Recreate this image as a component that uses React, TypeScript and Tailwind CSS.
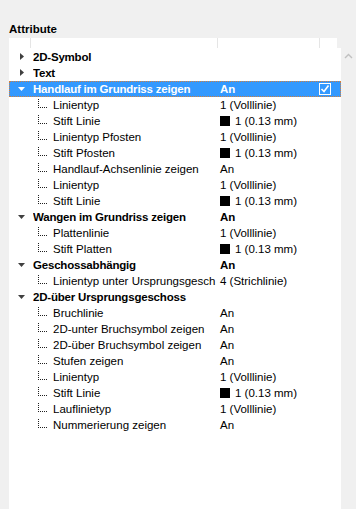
import React from 'react';

type Row = {
  label: string;
  value?: string;
  level: 0 | 1;
  open?: boolean;
  swatch?: boolean;
  boldValue?: boolean;
  selected?: boolean;
};

const rows: Row[] = [
  { label: '2D-Symbol', level: 0, open: false },
  { label: 'Text', level: 0, open: false },
  { label: 'Handlauf im Grundriss zeigen', value: 'An', level: 0, open: true, boldValue: true, selected: true },
  { label: 'Linientyp', value: '1 (Volllinie)', level: 1 },
  { label: 'Stift Linie', value: '1 (0.13 mm)', level: 1, swatch: true },
  { label: 'Linientyp Pfosten', value: '1 (Volllinie)', level: 1 },
  { label: 'Stift Pfosten', value: '1 (0.13 mm)', level: 1, swatch: true },
  { label: 'Handlauf-Achsenlinie zeigen', value: 'An', level: 1 },
  { label: 'Linientyp', value: '1 (Volllinie)', level: 1 },
  { label: 'Stift Linie', value: '1 (0.13 mm)', level: 1, swatch: true },
  { label: 'Wangen im Grundriss zeigen', value: 'An', level: 0, open: true, boldValue: true },
  { label: 'Plattenlinie', value: '1 (Volllinie)', level: 1 },
  { label: 'Stift Platten', value: '1 (0.13 mm)', level: 1, swatch: true },
  { label: 'Geschossabhängig', value: 'An', level: 0, open: true, boldValue: true },
  { label: 'Linientyp unter Ursprungsgesch', value: '4 (Strichlinie)', level: 1 },
  { label: '2D-über Ursprungsgeschoss', level: 0, open: true },
  { label: 'Bruchlinie', value: 'An', level: 1 },
  { label: '2D-unter Bruchsymbol zeigen', value: 'An', level: 1 },
  { label: '2D-über Bruchsymbol zeigen', value: 'An', level: 1 },
  { label: 'Stufen zeigen', value: 'An', level: 1 },
  { label: 'Linientyp', value: '1 (Volllinie)', level: 1 },
  { label: 'Stift Linie', value: '1 (0.13 mm)', level: 1, swatch: true },
  { label: 'Lauflinietyp', value: '1 (Volllinie)', level: 1 },
  { label: 'Nummerierung zeigen', value: 'An', level: 1 },
];

// kleine Pfeile wie im Windows-Baum
function Arrow({ open, white }: { open: boolean; white?: boolean }) {
  const fill = white ? '#ffffff' : '#404040';
  return open ? (
    <svg width="8" height="5" viewBox="0 0 8 5">
      <polygon points="0,0 7,0 3.5,4" fill={fill} />
    </svg>
  ) : (
    <svg width="5" height="8" viewBox="0 0 5 8">
      <polygon points="0,0 4,3.5 0,7" fill={fill} />
    </svg>
  );
}

// gepunktete Baumlinie
function TreeLine() {
  const dots: React.ReactNode[] = [];
  for (let y = 0; y <= 8; y += 2) dots.push(<rect key={'v' + y} x={0} y={y} width={1} height={1} />);
  for (let x = 2; x <= 8; x += 2) dots.push(<rect key={'h' + x} x={x} y={8} width={1} height={1} />);
  return (
    <svg width="9" height="9" viewBox="0 0 9 9" fill="#202020" className="mt-[-3px] shrink-0">
      {dots}
    </svg>
  );
}

function Checkbox() {
  return (
    <div className="w-[12px] h-[12px] border border-white flex items-center justify-center">
      <svg width="10" height="10" viewBox="0 0 10 10">
        <path d="M1.5 5 L4 7.5 L8.5 1.5" stroke="#ffffff" strokeWidth="1.6" fill="none" />
      </svg>
    </div>
  );
}

function TreeRow({ row }: { row: Row }) {
  const sel = row.selected;
  return (
    <div
      className={
        'relative flex items-center h-[16px] ' +
        (sel ? 'bg-[#3399ff] text-white outline-1 outline-dotted outline-offset-[-1px] outline-[#d08040]' : 'text-[#000000]')
      }
    >
      <div className="w-[24px] shrink-0 h-full flex items-center justify-center pl-[2px]">
        {row.level === 0 && <Arrow open={!!row.open} white={sel} />}
      </div>
      <div
        className={
          'w-[187px] shrink-0 flex items-center whitespace-nowrap overflow-hidden ' +
          (row.level === 0 ? 'font-bold tracking-[-0.2px]' : '')
        }
      >
        {row.level === 1 && (
          <div className="w-[20px] shrink-0 pl-[5px] flex items-center">
            <TreeLine />
          </div>
        )}
        <span>{row.label}</span>
      </div>
      <div className={'flex-1 flex items-center whitespace-nowrap ' + (row.boldValue ? 'font-bold' : '')}>
        {row.swatch && <span className="inline-block w-[10px] h-[10px] bg-black mr-[5px]" />}
        <span>{row.value}</span>
      </div>
      {sel && (
        <div className="w-[22px] flex items-center justify-start">
          <Checkbox />
        </div>
      )}
    </div>
  );
}

export default function App() {
  return (
    <div
      className="w-[356px] h-[509px] bg-[#f0f0f0] flex flex-col overflow-hidden text-[11.5px] leading-[16px]"
      style={{ fontFamily: '"Liberation Sans", Arial, sans-serif' }}
    >
      <div className="h-[38px] pl-[9px] pt-[21px] font-bold text-black">Attribute</div>
      <div className="flex flex-1">
        <div className="ml-[9px] w-[332px] flex flex-col">
          {/* Kopfzeile */}
          <div className="w-[328px] h-[10px] bg-white flex">
            <div className="w-[22px] border-r border-[#e5e5e5]" />
            <div className="w-[187px] border-r border-[#e5e5e5]" />
            <div className="w-[102px] border-r border-[#e5e5e5]" />
          </div>
          <div className="flex-1 bg-white pt-px">
            {rows.map((r, i) => (
              <TreeRow key={i} row={r} />
            ))}
          </div>
        </div>
        <div className="w-[15px] flex justify-center pt-[15px]">
          <svg width="9" height="6" viewBox="0 0 9 6">
            <path d="M1 5 L4.5 1.5 L8 5" stroke="#c0c0c0" strokeWidth="1.4" fill="none" />
          </svg>
        </div>
      </div>
    </div>
  );
}
